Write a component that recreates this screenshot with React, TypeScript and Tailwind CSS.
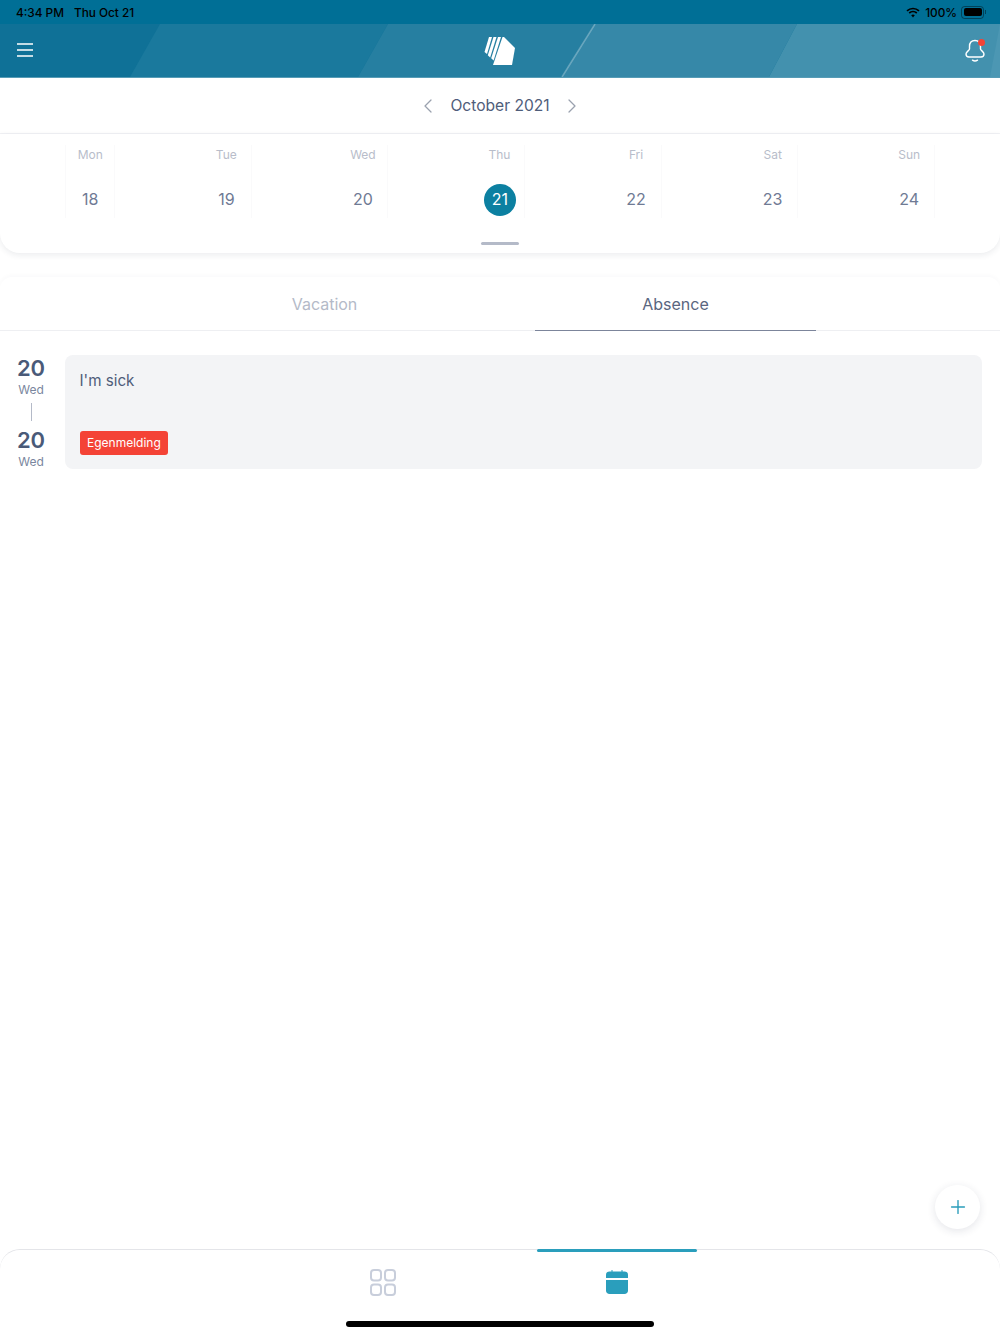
import React from 'react';
import { ChevronLeft, ChevronRight, Plus } from 'lucide-react';

const days = [
  { name: 'Mon', num: 18, line: 'border-x' },
  { name: 'Tue', num: 19, line: 'border-r' },
  { name: 'Wed', num: 20, line: 'border-r' },
  { name: 'Thu', num: 21, line: 'border-r' },
  { name: 'Fri', num: 22, line: 'border-r' },
  { name: 'Sat', num: 23, line: 'border-r' },
  { name: 'Sun', num: 24, line: 'border-r' },
];

function HeaderBands() {
  // slanted bands behind the app bar
  return (
    <svg className="absolute inset-0 h-full w-full" viewBox="0 0 1000 54" preserveAspectRatio="none">
      <polygon points="160,0 388,0 358,54 130,54" fill="#1a799d" />
      <polygon points="388,0 595,0 562,54 358,54" fill="#267fa1" />
      <polygon points="595,0 797,0 769,54 562,54" fill="#3688a8" />
      <polygon points="797,0 1000,0 1000,54 769,54" fill="#4391ae" />
      <polygon points="1020,0 1000,0 990,54 1000,54" fill="#4c97b3" />
      <line x1="595" y1="0" x2="562" y2="54" stroke="#ffffff" strokeOpacity="0.3" strokeWidth="1.5" />
    </svg>
  );
}

function Logo() {
  return (
    <svg width="32" height="28" viewBox="0 0 32 28" fill="#ffffff">
      <polygon points="5,0 8,0 3,17 0.5,15" />
      <polygon points="9.5,0 12.5,0 6.2,20.5 3.8,18.2" />
      <polygon points="14,0 17,0 9.6,23.5 7.2,21.2" />
      <polygon points="18.5,0 20,0 31,11 28,28 9,28" />
    </svg>
  );
}

function Wifi() {
  return (
    <svg width="14" height="11" viewBox="0 0 14 11" fill="none" stroke="#000000" strokeWidth="1.7">
      <path d="M1 3.8C4.4 .7 9.6 .7 13 3.8" />
      <path d="M3.2 6C5.3 4.2 8.7 4.2 10.8 6" />
      <path d="M7 10.4 5.2 8.2C6.2 7.4 7.8 7.4 8.8 8.2Z" fill="#000000" stroke="none" />
    </svg>
  );
}

function Battery() {
  return (
    <div className="flex items-center">
      <div className="h-[13px] w-[23px] rounded-[3.5px] border border-black/40 p-[1.5px]">
        <div className="h-full w-full rounded-[2px] bg-black" />
      </div>
      <div className="ml-[1px] h-[4px] w-[1px] bg-black/40" />
    </div>
  );
}

function Bell() {
  return (
    <div className="relative -mr-[1px] h-[24px] w-[24px]">
      <svg width="24" height="24" viewBox="0 0 24 24" fill="none" stroke="#ffffff" strokeWidth="1.4" strokeLinecap="round" strokeLinejoin="round">
        <path d="M12 1.5C8.5 1.5 6.5 4 6.5 7.5V10C6.5 11.5 3 12.5 3 15C3 17 4.5 18 6 18H18C19.5 18 21 17 21 15C21 12.5 17.5 11.5 17.5 10V7.5C17.5 4 15.5 1.5 12 1.5Z" />
        <path d="M9.5 21.2C11 22.2 13 22.2 14.5 21.2" />
      </svg>
      <div className="absolute left-[14.5px] top-[0.5px] h-[7px] w-[7px] rounded-full bg-[#f44336]" />
    </div>
  );
}

function MenuIcon() {
  return (
    <svg className="relative mb-[2px] ml-[1px]" width="16" height="14" viewBox="0 0 16 14" stroke="#ffffff" strokeWidth="1.6">
      <path d="M0 1H16M0 7H16M0 13H16" />
    </svg>
  );
}

function DateBlock() {
  return (
    <div className="flex flex-col items-center">
      <span className="text-[22px] font-semibold leading-[26px] text-[#4a5a78]">20</span>
      <span className="text-[12px] leading-[17px] text-[#7a869e]">Wed</span>
    </div>
  );
}

export default function App() {
  return (
    <div className="relative flex h-[1334px] w-[1000px] flex-col overflow-hidden bg-white font-['Inter',sans-serif]">
      {/* status bar */}
      <div className="flex h-[24px] items-center justify-between bg-[#006f96] pl-[16px] pr-[14px] text-[11.8px] font-medium leading-[16px] text-black">
        <div className="flex gap-[10px] pt-[1px]">
          <span>4:34 PM</span>
          <span>Thu Oct 21</span>
        </div>
        <div className="flex items-center gap-[4px]">
          <div className="mr-[1px]">
            <Wifi />
          </div>
          <span className="pt-[1px]">100%</span>
          <Battery />
        </div>
      </div>

      {/* app bar */}
      <div className="relative flex h-[54px] items-center justify-between border-b border-white/30 bg-[#0f7197] pl-[16px] pr-[14px]">
        <HeaderBands />
        <MenuIcon />
        <div className="absolute left-[484px] top-[13px]">
          <Logo />
        </div>
        <div className="relative">
          <Bell />
        </div>
      </div>

      {/* month switcher */}
      <div className="flex h-[56px] items-center justify-center gap-[10px] border-b border-[#f1f2f5]">
        <ChevronLeft className="text-[#9aa1ae]" size={24} strokeWidth={1.25} />
        <span className="text-[15.6px] leading-[24px] text-[#4f5d7a]">October 2021</span>
        <ChevronRight className="text-[#9aa1ae]" size={24} strokeWidth={1.25} />
      </div>

      {/* week strip */}
      <div className="relative h-[119px] rounded-b-[20px] bg-white px-[22px] pt-[11px] shadow-[0_2px_6px_rgba(30,40,70,0.09)]">
        <div className="grid grid-cols-7">
          {days.map((d) => (
            <div key={d.name} className="flex justify-center">
              <div className={`flex h-[73px] w-[50px] flex-col items-center border-[#fafafb] ${d.line}`}>
                <span className="mt-[2px] text-[12px] leading-[16px] text-[#b8bdca]">{d.name}</span>
                {d.num === 21 ? (
                  <span className="ml-[1px] mt-[21px] flex h-[32px] w-[32px] items-center justify-center rounded-full bg-[#0c80a1] pb-[2px] text-[16px] leading-[24px] text-white">
                    {d.num}
                  </span>
                ) : (
                  <span className="mt-[21px] flex h-[32px] items-center pb-[2px] text-[16px] leading-[24px] text-[#6f7a94]">{d.num}</span>
                )}
              </div>
            </div>
          ))}
        </div>
        <div className="absolute bottom-[8px] left-[481px] h-[3px] w-[38px] rounded-full bg-[#b4bac8]" />
      </div>

      {/* tabs */}
      <div className="mt-[24px] flex h-[54px] justify-center gap-[70px] rounded-t-[12px] border-b border-[#eeeff2] shadow-[0_-2px_4px_rgba(30,40,70,0.025)]">
        <div className="flex w-[281px] items-center justify-center text-[16px] text-[#b4bac8]">Vacation</div>
        <div className="-mb-[1px] flex w-[281px] items-center justify-center border-b border-[#7c859b] text-[16px] text-[#5a6680]">
          Absence
        </div>
      </div>

      {/* absence row */}
      <div className="mt-[24px] flex pr-[18px]">
        <div className="flex w-[65px] shrink-0 flex-col items-center pr-[3px]">
          <DateBlock />
          <div className="mb-[5.5px] mt-[5px] h-[18px] w-px bg-[#b4bac8]" />
          <DateBlock />
        </div>
        <div className="flex h-[114px] flex-1 flex-col items-start justify-between rounded-[8px] bg-[#f3f4f6] px-[14.5px] pb-[14px] pt-[16px]">
          <span className="text-[15.2px] leading-[20px] text-[#4f5d7a]">I'm sick</span>
          <span className="flex h-[24px] items-center rounded-[3px] bg-[#f44336] px-[7.5px] text-[12px] text-white">Egenmelding</span>
        </div>
      </div>

      {/* add button */}
      <div className="absolute left-[935px] top-[1185px] flex h-[44px] w-[45px] items-center justify-center rounded-full bg-white shadow-[0_2px_8px_rgba(30,40,70,0.12)]">
        <Plus className="text-[#2a9dbb]" size={22} strokeWidth={1.5} />
      </div>

      {/* bottom tab bar */}
      <div className="relative mt-auto h-[85px] rounded-t-[20px] border-t border-[#e4e5e9]">
        <div className="absolute left-[537px] top-[-1px] h-[3px] w-[160px] rounded-full bg-[#2a9ebc]" />
        <div className="absolute left-[370px] top-[19px]">
          <svg width="26" height="27" viewBox="0 0 26 27" fill="none" stroke="#c8cedb" strokeWidth="2">
            <rect x="1" y="1" width="10" height="10.5" rx="3" />
            <rect x="15" y="1" width="10" height="10.5" rx="3" />
            <rect x="1" y="15.5" width="10" height="10.5" rx="3" />
            <rect x="15" y="15.5" width="10" height="10.5" rx="3" />
          </svg>
        </div>
        <div className="absolute left-[606px] top-[20px]">
          <svg width="22" height="24" viewBox="0 0 22 24">
            <path d="M6 0V3M16 0V3" stroke="#2a9ebc" strokeWidth="1" />
            <path d="M0 8V4.5C0 2.5 1.5 1.5 3.5 1.5H18.5C20.5 1.5 22 2.5 22 4.5V8Z" fill="#2a9ebc" />
            <path d="M0 10H22V20.5C22 22.8 20.5 24 18.5 24H3.5C1.5 24 0 22.8 0 20.5Z" fill="#2a9ebc" />
          </svg>
        </div>
        <div className="absolute left-[346px] top-[71px] h-[5.5px] w-[308px] rounded-full bg-black" />
      </div>
    </div>
  );
}
